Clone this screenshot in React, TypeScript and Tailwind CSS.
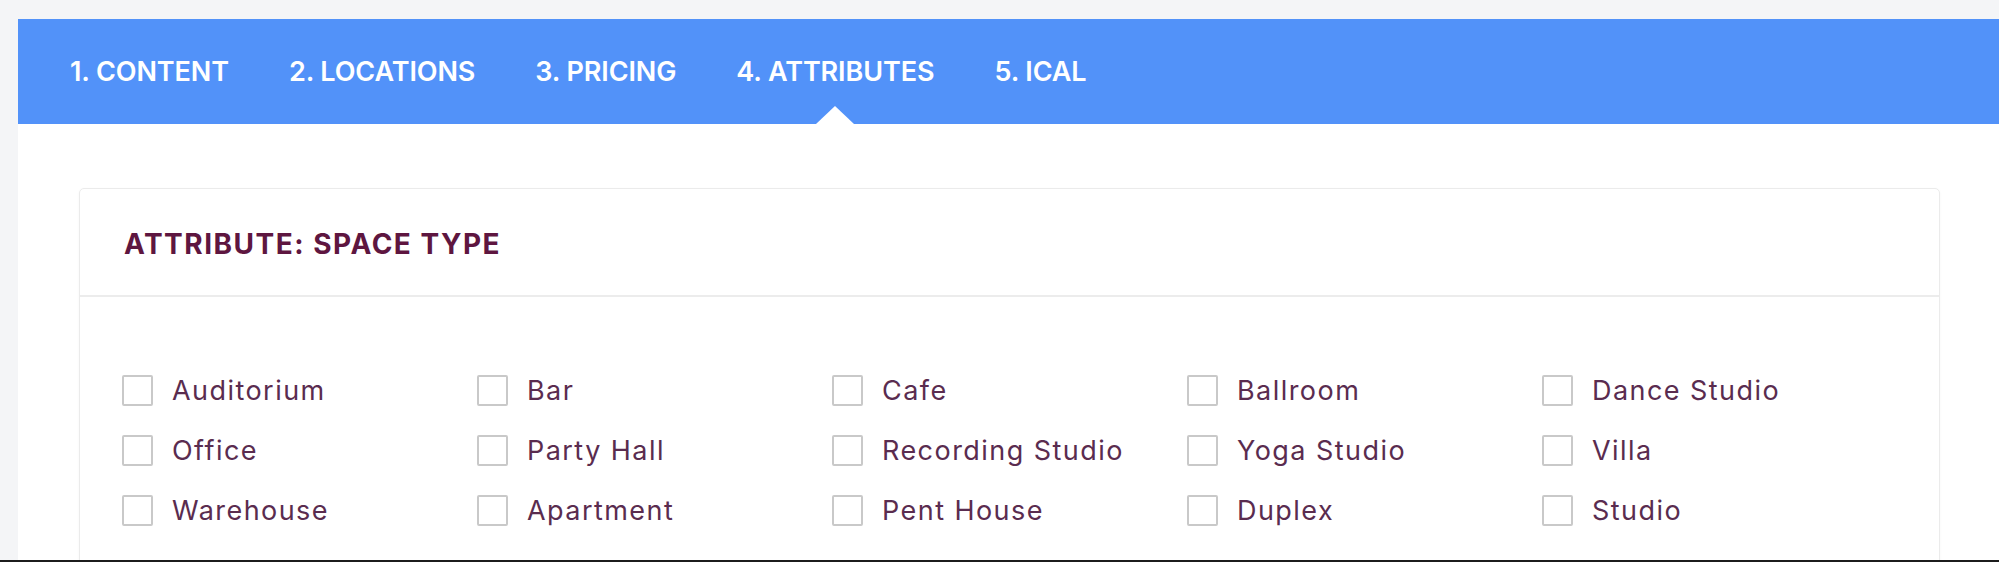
import * as React from "react";

const tabs = ["1. CONTENT", "2. LOCATIONS", "3. PRICING", "4. ATTRIBUTES", "5. ICAL"];

const spaceTypes = [
  "Auditorium",
  "Bar",
  "Cafe",
  "Ballroom",
  "Dance Studio",
  "Office",
  "Party Hall",
  "Recording Studio",
  "Yoga Studio",
  "Villa",
  "Warehouse",
  "Apartment",
  "Pent House",
  "Duplex",
  "Studio",
];

const App = () => {
  const [active] = React.useState<number>(3);
  const [checked, setChecked] = React.useState<string[]>([]);

  const toggle = (name: string) =>
    setChecked((prev) => (prev.includes(name) ? prev.filter((n) => n !== name) : [...prev, name]));

  return (
    <div className="h-[562px] overflow-hidden bg-[#f4f5f7] pt-[19px] pl-[18px] border-b-2 border-[#1c1c1c] font-['Inter','Liberation_Sans',sans-serif]">
      <div className="flex h-full flex-col bg-white">
        {/* tabs */}
        <div className="flex h-[105px] shrink-0 items-center gap-[60px] bg-[#5292f9] pl-[52px]">
          {tabs.map((tab, i) => (
            <div key={tab} className="relative flex h-full items-center pt-[2px]">
              <span className="text-[27px] font-semibold tracking-[-0.1px] text-white">{tab}</span>
              {i === active && (
                <span className="absolute bottom-0 left-1/2 h-0 w-0 -translate-x-1/2 border-x-[19px] border-b-[18px] border-x-transparent border-b-white" />
              )}
            </div>
          ))}
        </div>

        {/* attribute card */}
        <div className="pt-[64px] pl-[61px] pr-[59px]">
          <div className="rounded-[5px] border border-[#ebebeb] shadow-[0_1px_3px_rgba(0,0,0,0.04)]">
            <div className="flex h-[108px] items-center border-b-2 border-[#ececec] px-[44px] pt-[4px]">
              <h2 className="text-[28px] font-bold tracking-[1.5px] text-[#5e1640]">ATTRIBUTE: SPACE TYPE</h2>
            </div>
            <div className="grid grid-cols-5 gap-y-[29px] px-[42px] pt-[78px] pb-[40px]">
              {spaceTypes.map((name) => (
                <label key={name} className="flex cursor-pointer items-center gap-[19px]">
                  <input
                    type="checkbox"
                    checked={checked.includes(name)}
                    onChange={() => toggle(name)}
                    className="h-[31px] w-[31px] shrink-0 appearance-none rounded-[2px] border-2 border-[#c9c9c9] bg-white"
                  />
                  <span className="text-[27px] leading-[31px] tracking-[1.45px] text-[#5a2c4f]">{name}</span>
                </label>
              ))}
            </div>
          </div>
        </div>
      </div>
    </div>
  );
};

export default App;
